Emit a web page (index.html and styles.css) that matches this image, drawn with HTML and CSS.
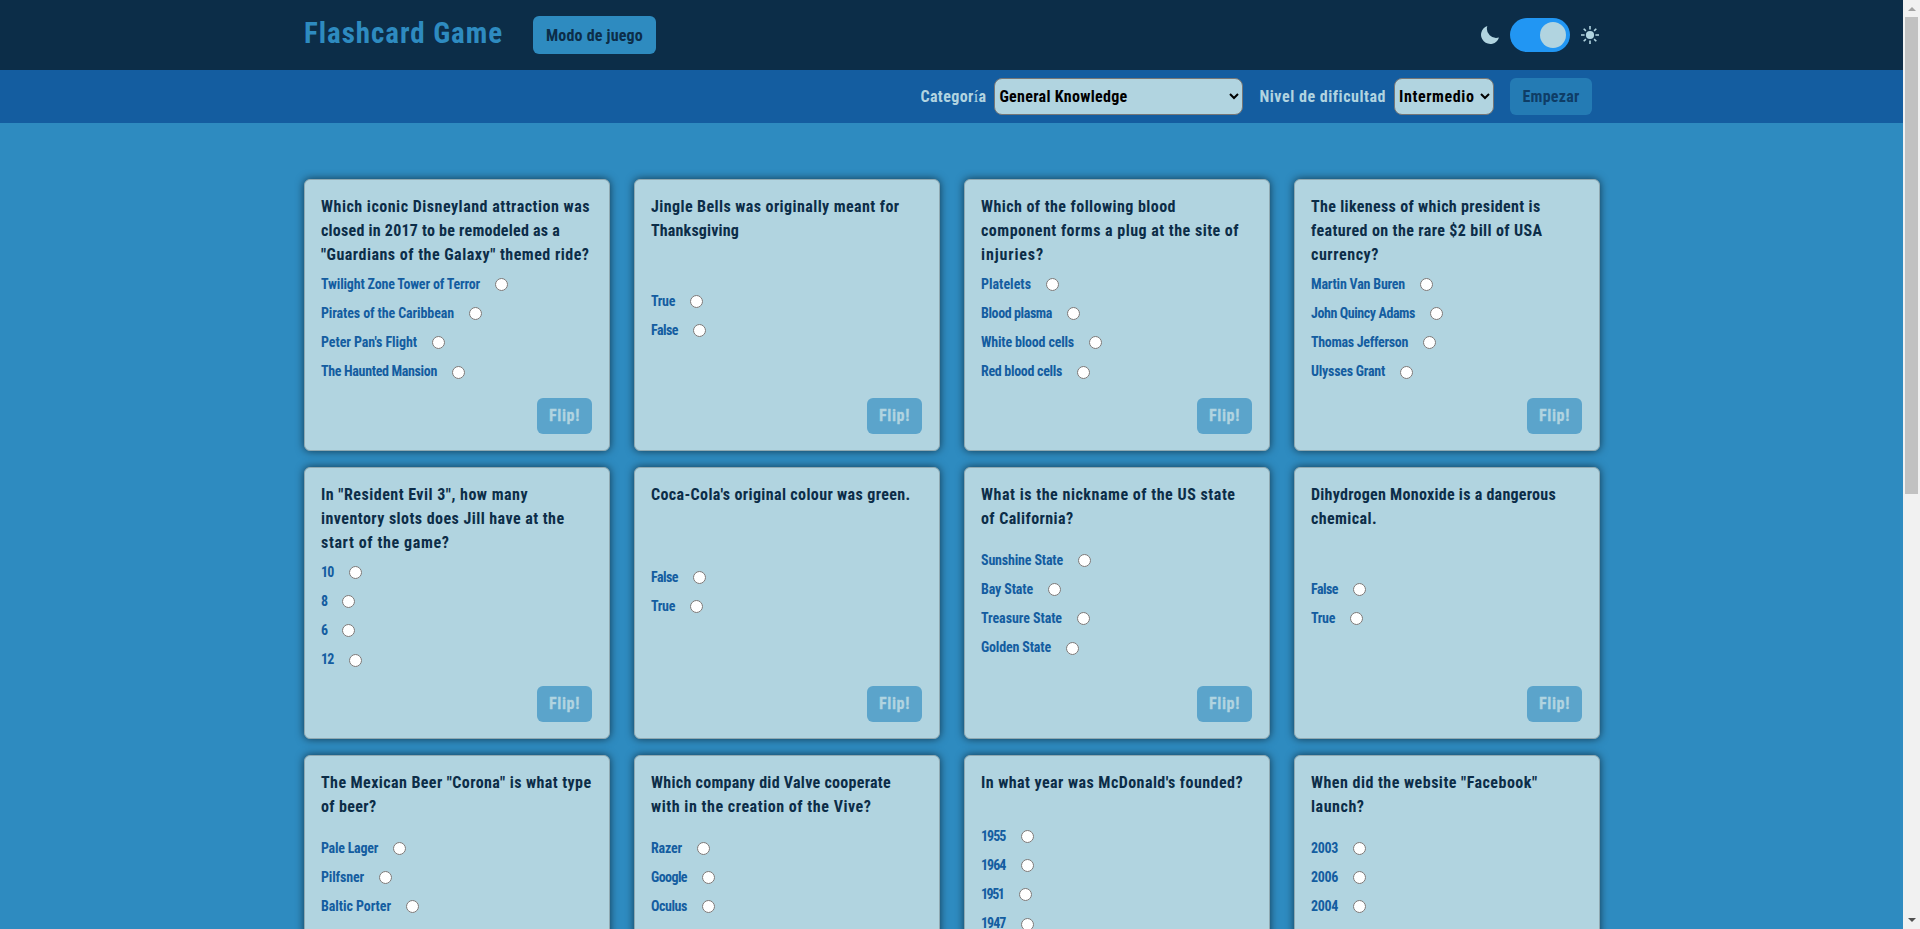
FILE: index.html
```
<!DOCTYPE html>
<html lang="es">
<head>
<meta charset="utf-8">
<title>Flashcard Game</title>
<link rel="stylesheet" href="styles.css">
</head>
<body>
<div class="page">
  <header class="header">
    <div class="container header-row">
      <h1 class="logo" data-width="199">Flashcard Game</h1>
      <button class="btn btn-mode"><span data-width="97">Modo de juego</span></button>
      <div class="theme">
        <svg class="icon" viewBox="0 0 18 18"><path d="M6.300 0A9.200 9.200 0 1 0 18 11.500A9.300 9.300 0 0 1 6.300 0Z"/></svg>
        <span class="switch"><span class="knob"></span></span>
        <svg class="icon" viewBox="0 0 18 18"><circle cx="9" cy="9" r="4.100"/><path class="rays" d="M9 0V3.600M9 14.400V18M0 9H3.600M14.400 9H18M2.700 2.700L4.900 4.900M13.100 13.100L15.300 15.300M2.700 15.300L4.900 13.100M13.100 4.900L15.300 2.700"/></svg>
      </div>
    </div>
  </header>
  <nav class="bar">
    <div class="container bar-row">
      <label class="label" data-width="66">Categor<span class="accent">í</span>a</label>
      <select class="select select-category"><option>General Knowledge</option></select>
      <label class="label label-level" data-width="126">Nivel de dificultad</label>
      <select class="select select-level"><option>Intermedio</option></select>
      <button class="btn btn-start" disabled><span data-width="57">Empezar</span></button>
    </div>
  </nav>
  <main class="container cards" id="cards"></main>
</div>
<div class="scroll">
  <span class="arrow arrow-up"></span>
  <span class="thumb"></span>
  <span class="arrow arrow-down"></span>
</div>
<script src="script.js"></script>
</body>
</html>
```
FILE: styles.css
```
* { box-sizing: border-box; }
body {
  margin: 0;
  height: 929px;
  display: flex;
  overflow: hidden;
  background: #2e8bc0;
  font-family: "Roboto Condensed", Roboto, "Liberation Sans", sans-serif;
  font-weight: 700;
  font-size: 16px;
  color: #0c2d48;
}
.page { flex: 1; height: 929px; overflow: hidden; }
.container { width: 1296px; margin-left: 304px; }
[data-width] { white-space: nowrap; }

.header { height: 70px; background: #0c2d48; }
.header-row { height: 70px; display: flex; align-items: center; }
.logo { flex: none; width: 229px; margin: 0 0 5px; font-size: 29px; line-height: 34px; color: #2e8bc0; }
.btn {
  flex: none;
  border: 0;
  border-radius: 6px;
  padding: 0;
  font: inherit;
  color: #0c2d48;
  background: #2e8bc0;
}
.btn-mode { width: 123px; height: 38px; }
.theme { margin-left: auto; display: flex; align-items: center; gap: 11px; padding-right: 1px; }
.icon { width: 18px; height: 18px; fill: #b1d4e0; }
.rays { fill: none; stroke: #b1d4e0; stroke-width: 1.6; }
.switch {
  width: 60px;
  height: 34px;
  padding: 4px;
  border-radius: 17px;
  background: #2196f3;
  display: flex;
  justify-content: flex-end;
}
.knob { width: 26px; height: 26px; border-radius: 50%; background: #b1d4e0; }

.bar { height: 53px; background: #145da0; }
.bar-row { height: 53px; display: flex; align-items: center; justify-content: flex-end; padding-right: 8px; }
.label { color: #b1d4e0; }
.accent { font-family: "Liberation Serif", serif; font-weight: 400; }
.label-level { margin-left: 16px; }
.select {
  height: 37px;
  margin-left: 8px;
  border: 1px solid #767676;
  border-radius: 8px;
  background: #b1d4e0;
  color: #000;
  font: inherit;
}
.select-category { width: 249px; letter-spacing: .3px; }
.select-level { width: 100px; letter-spacing: .6px; }
.btn-start { width: 82px; height: 37px; margin-left: 16px; opacity: .65; }

.cards {
  padding-top: 56px;
  display: grid;
  grid-template-columns: repeat(4, 306px);
  grid-auto-rows: 272px;
  gap: 16px 24px;
}
.card {
  display: flex;
  flex-direction: column;
  border: 1px solid #8fa9b2;
  border-radius: 6px;
  background: #b1d4e0;
  box-shadow: 0 0 8px rgba(0, 0, 0, .6);
  padding: 15px 17px 16px 16px;
}
.title { margin: 0; font-size: 16px; line-height: 24px; font-weight: 700; }
.line { display: block; width: max-content; }
.options { flex: 1; display: flex; flex-direction: column; justify-content: center; padding-top: .6px; }
.option { flex: none; height: 29.2px; display: flex; align-items: center; gap: 15px; color: #145da0; font-size: 14px; }
.option input { margin: 2px 0 0; width: 13px; height: 13px; }
.btn-flip { align-self: flex-end; width: 55px; height: 36px; margin-top: 11px; padding-bottom: 1px; color: #b1d4e0; opacity: .65; -webkit-text-stroke: .3px #b1d4e0; }

.scroll {
  width: 17px;
  height: 929px;
  background: #f1f1f1;
  display: flex;
  flex-direction: column;
  align-items: center;
}
.thumb { width: 13px; height: 477px; margin-top: 6px; background: #c1c1c1; }
.arrow { border: 4px solid transparent; border-width: 0 4px; }
.arrow-up { margin-top: 7px; border-bottom: 4px solid #a3a3a3; }
.arrow-down { margin-top: auto; margin-bottom: 7px; border-top: 4px solid #505050; }
```
FILE: script.js
```
// Each text is paired with the width it occupies in the card.
const cards = [
  { title: [['Which iconic Disneyland attraction was', 269], ['closed in 2017 to be remodeled as a', 239], ['"Guardians of the Galaxy" themed ride?', 268.5]],
    options: [['Twilight Zone Tower of Terror', 159], ['Pirates of the Caribbean', 133], ["Peter Pan's Flight", 96], ['The Haunted Mansion', 116]] },
  { title: [['Jingle Bells was originally meant for', 248.5], ['Thanksgiving', 88]],
    options: [['True', 24], ['False', 27]] },
  { title: [['Which of the following blood', 195], ['component forms a plug at the site of', 258], ['injuries?', 63]],
    options: [['Platelets', 50], ['Blood plasma', 71], ['White blood cells', 93], ['Red blood cells', 81]] },
  { title: [['The likeness of which president is', 229.5], ['featured on the rare $2 bill of USA', 231.5], ['currency?', 68]],
    options: [['Martin Van Buren', 94], ['John Quincy Adams', 104], ['Thomas Jefferson', 97], ['Ulysses Grant', 74]] },
  { title: [['In "Resident Evil 3", how many', 207], ['inventory slots does Jill have at the', 243.5], ['start of the game?', 128.5]],
    options: [['10', 12.5], ['8', 6], ['6', 6], ['12', 12.5]] },
  { title: [["Coca-Cola's original colour was green.", 259.5]],
    options: [['False', 27], ['True', 24]] },
  { title: [['What is the nickname of the US state', 254.5], ['of California?', 92.5]],
    options: [['Sunshine State', 82], ['Bay State', 52], ['Treasure State', 81], ['Golden State', 70]] },
  { title: [['Dihydrogen Monoxide is a dangerous', 245], ['chemical.', 66]],
    options: [['False', 27], ['True', 24]] },
  { title: [['The Mexican Beer "Corona" is what type', 270.5], ['of beer?', 55.5]],
    options: [['Pale Lager', 57], ['Pilfsner', 43], ['Baltic Porter', 70], ['Stout', 30]] },
  { title: [['Which company did Valve cooperate', 240], ['with in the creation of the Vive?', 220.5]],
    options: [['Razer', 31], ['Google', 36], ['Oculus', 36], ['HTC', 22]] },
  { title: [["In what year was McDonald's founded?", 262]],
    options: [['1955', 24.5], ['1964', 24.5], ['1951', 22.5], ['1947', 24.5]] },
  { title: [['When did the website "Facebook"', 226.5], ['launch?', 53.5]],
    options: [['2003', 27], ['2006', 27], ['2004', 27], ['2005', 27]] }
];

document.getElementById('cards').innerHTML = cards.map((card, i) => `
  <article class="card">
    <h2 class="title">${card.title.map(([t, w]) => `<span class="line" data-width="${w}">${t}</span>`).join(' ')}</h2>
    <div class="options">${card.options.map(([t, w]) => `
      <label class="option"><span data-width="${w}">${t}</span><input type="radio" name="q${i}"></label>`).join('')}
    </div>
    <button class="btn btn-flip" disabled><span data-width="31">Flip!</span></button>
  </article>`).join('');

// Track the letters so that every text fills its own width.
document.querySelectorAll('[data-width]').forEach((el) => {
  const range = document.createRange();
  range.selectNodeContents(el);
  const natural = range.getBoundingClientRect().width;
  el.style.letterSpacing = (el.dataset.width - natural) / el.textContent.length + 'px';
});
```
